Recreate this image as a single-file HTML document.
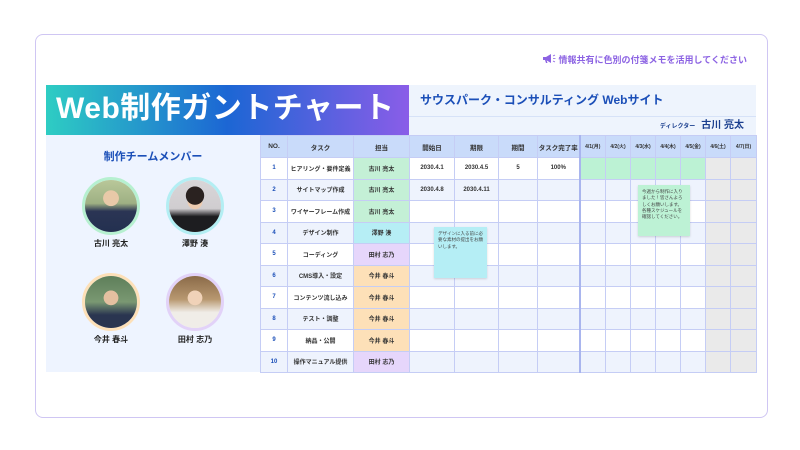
<!DOCTYPE html>
<html><head><meta charset="utf-8"><style>
*{margin:0;padding:0;box-sizing:border-box}
body{width:800px;height:450px;background:#fff;font-family:"Liberation Sans","Noto Sans CJK JP",sans-serif;position:relative;overflow:hidden}
.card{position:absolute;left:35px;top:34px;width:733px;height:384px;border:1px solid #cfc6f3;border-radius:8px}
.notice{position:absolute;left:542px;top:53px;font-size:9px;font-weight:bold;color:#8c63e3;white-space:nowrap}
.banner{position:absolute;left:46px;top:85px;width:363px;height:50px;background:linear-gradient(90deg,#2ecdc3 0%,#1c66d4 50%,#8a5de8 100%);color:#fff;font-weight:bold;font-size:30px;line-height:48px;padding-left:10px;letter-spacing:0.5px;white-space:nowrap}
.proj{position:absolute;left:409px;top:85px;width:347px;height:32px;background:#eef4fd;border-bottom:1px solid #d6e2f8;color:#1b4fb8;font-weight:bold;font-size:12px;line-height:30px;padding-left:11px}
.dir{position:absolute;left:409px;top:117px;width:347px;height:18px;background:#eef4fd;text-align:right;padding-right:12px;font-size:10px;font-weight:bold;color:#1b3f8f;line-height:18px}
.dir small{font-size:6px;margin-right:6px}
.left{position:absolute;left:46px;top:135px;width:214px;height:237px;background:#eef4ff}
.lt{position:absolute;left:0;width:214px;top:13px;text-align:center;color:#1b4fb8;font-weight:bold;font-size:11px}
.av{position:absolute;width:58px;height:58px;border-radius:50%;border:3px solid}
.av i{display:block;width:100%;height:100%;border-radius:50%}
.nm{position:absolute;width:80px;text-align:center;font-size:8px;font-weight:bold;color:#222}
table{position:absolute;left:260px;top:135px;border-collapse:collapse;table-layout:fixed;font-size:6px;font-weight:bold;color:#333}
td{border:1px solid #c5cdf5;height:21.5px;text-align:center;vertical-align:middle;white-space:nowrap;overflow:hidden}
tr.h td{background:#c9dbfa;height:22px;font-size:6.5px;color:#333}
tr.h td.dd{font-size:5px}
tr:nth-child(odd):not(.h) td{background:#eef3fd}
td.n{color:#1b4fb8}
td.g{background:#c4f0d6!important}td.c{background:#b6eef5!important}td.p{background:#e6d6fb!important}td.o{background:#fde0b8!important}
td.gr{background:#eaeaea!important}td.gg{background:#bcf2d4!important}
td.b{border-left:2px solid #a9b5ee}
.st{position:absolute;font-size:4.5px;color:#444;padding:4px 4px;line-height:1.4;box-shadow:0 1px 2px rgba(0,0,0,.15)}
</style></head><body>
<div class="card"></div>
<div class="notice"><svg width="14" height="11" viewBox="0 0 14 11" style="vertical-align:-1px"><path d="M1 4h3l5-3v9L4 7H1z" fill="#8c63e3"/><path d="M3 7l1 3h1.5l-1-3z" fill="#8c63e3"/><path d="M11 3l2-1M11 5.5h2.5M11 8l2 1" stroke="#8c63e3" stroke-width="0.8"/></svg> 情報共有に色別の付箋メモを活用してください</div>
<div class="banner">Web制作ガントチャート</div>
<div class="proj">サウスパーク・コンサルティング Webサイト</div>
<div class="dir"><small>ディレクター</small>古川 亮太</div>
<div class="left">
<div class="lt">制作チームメンバー</div>
<div class="av" style="left:36px;top:42px;border-color:#b6f0d0"><i style="background:radial-gradient(circle at 50% 35%,#e8c9a8 0 18%,transparent 19%),linear-gradient(180deg,#b9c89a 0%,#9eb083 45%,#2b3554 60%,#233050 100%)"></i></div>
<div class="av" style="left:120px;top:42px;border-color:#b3eef3"><i style="background:radial-gradient(circle at 50% 30%,#2a2220 0 20%,transparent 21%),radial-gradient(circle at 50% 42%,#eccbb0 0 18%,transparent 19%),linear-gradient(180deg,#d8d6d8 0%,#d0cdd0 55%,#1d1d20 70%)"></i></div>
<div class="av" style="left:36px;top:138px;border-color:#fde0b8"><i style="background:radial-gradient(circle at 50% 42%,#e4c0a0 0 18%,transparent 19%),linear-gradient(180deg,#5e7f5a 0%,#7a9872 50%,#2a3550 75%)"></i></div>
<div class="av" style="left:120px;top:138px;border-color:#e2d2f8"><i style="background:radial-gradient(circle at 50% 42%,#f0d2b8 0 18%,transparent 19%),linear-gradient(180deg,#8a6a48 0%,#b89870 45%,#f0ede8 70%)"></i></div>
<div class="nm" style="left:25px;top:103px">古川 亮太</div>
<div class="nm" style="left:109px;top:103px">澤野 湊</div>
<div class="nm" style="left:25px;top:199px">今井 春斗</div>
<div class="nm" style="left:109px;top:199px">田村 志乃</div>
</div>
<table>
<colgroup><col style="width:27px"><col style="width:66px"><col style="width:56px"><col style="width:45px"><col style="width:44px"><col style="width:39px"><col style="width:42px"><col style="width:26px"><col style="width:25px"><col style="width:25px"><col style="width:25px"><col style="width:25px"><col style="width:25px"><col style="width:26px"></colgroup>
<tr class="h"><td>NO.</td><td>タスク</td><td>担当</td><td>開始日</td><td>期限</td><td>期間</td><td>タスク完了率</td><td class="dd b">4/1(月)</td><td class="dd">4/2(火)</td><td class="dd">4/3(水)</td><td class="dd">4/4(木)</td><td class="dd">4/5(金)</td><td class="dd">4/6(土)</td><td class="dd">4/7(日)</td></tr>
<tr><td class="n">1</td><td>ヒアリング・要件定義</td><td class="g">古川 亮太</td><td>2030.4.1</td><td>2030.4.5</td><td>5</td><td>100%</td><td class="gg b"></td><td class="gg"></td><td class="gg"></td><td class="gg"></td><td class="gg"></td><td class="gr"></td><td class="gr"></td></tr>
<tr><td class="n">2</td><td>サイトマップ作成</td><td class="g">古川 亮太</td><td>2030.4.8</td><td>2030.4.11</td><td></td><td></td><td class="b"></td><td></td><td></td><td></td><td></td><td class="gr"></td><td class="gr"></td></tr>
<tr><td class="n">3</td><td>ワイヤーフレーム作成</td><td class="g">古川 亮太</td><td></td><td></td><td></td><td></td><td class="b"></td><td></td><td></td><td></td><td></td><td class="gr"></td><td class="gr"></td></tr>
<tr><td class="n">4</td><td>デザイン制作</td><td class="c">澤野 湊</td><td></td><td></td><td></td><td></td><td class="b"></td><td></td><td></td><td></td><td></td><td class="gr"></td><td class="gr"></td></tr>
<tr><td class="n">5</td><td>コーディング</td><td class="p">田村 志乃</td><td></td><td></td><td></td><td></td><td class="b"></td><td></td><td></td><td></td><td></td><td class="gr"></td><td class="gr"></td></tr>
<tr><td class="n">6</td><td>CMS導入・設定</td><td class="o">今井 春斗</td><td></td><td></td><td></td><td></td><td class="b"></td><td></td><td></td><td></td><td></td><td class="gr"></td><td class="gr"></td></tr>
<tr><td class="n">7</td><td>コンテンツ流し込み</td><td class="o">今井 春斗</td><td></td><td></td><td></td><td></td><td class="b"></td><td></td><td></td><td></td><td></td><td class="gr"></td><td class="gr"></td></tr>
<tr><td class="n">8</td><td>テスト・調整</td><td class="o">今井 春斗</td><td></td><td></td><td></td><td></td><td class="b"></td><td></td><td></td><td></td><td></td><td class="gr"></td><td class="gr"></td></tr>
<tr><td class="n">9</td><td>納品・公開</td><td class="o">今井 春斗</td><td></td><td></td><td></td><td></td><td class="b"></td><td></td><td></td><td></td><td></td><td class="gr"></td><td class="gr"></td></tr>
<tr><td class="n">10</td><td>操作マニュアル提供</td><td class="p">田村 志乃</td><td></td><td></td><td></td><td></td><td class="b"></td><td></td><td></td><td></td><td></td><td class="gr"></td><td class="gr"></td></tr>
</table>
<div class="st" style="left:434px;top:227px;width:53px;height:51px;background:#b5eef5">デザインに入る前に必要な素材の提出をお願いします。</div>
<div class="st" style="left:638px;top:185px;width:52px;height:51px;background:#bdf2d5">今週から制作に入りました！皆さんよろしくお願いします。<br>各種スケジュールを確認してください。</div>
</body></html>
